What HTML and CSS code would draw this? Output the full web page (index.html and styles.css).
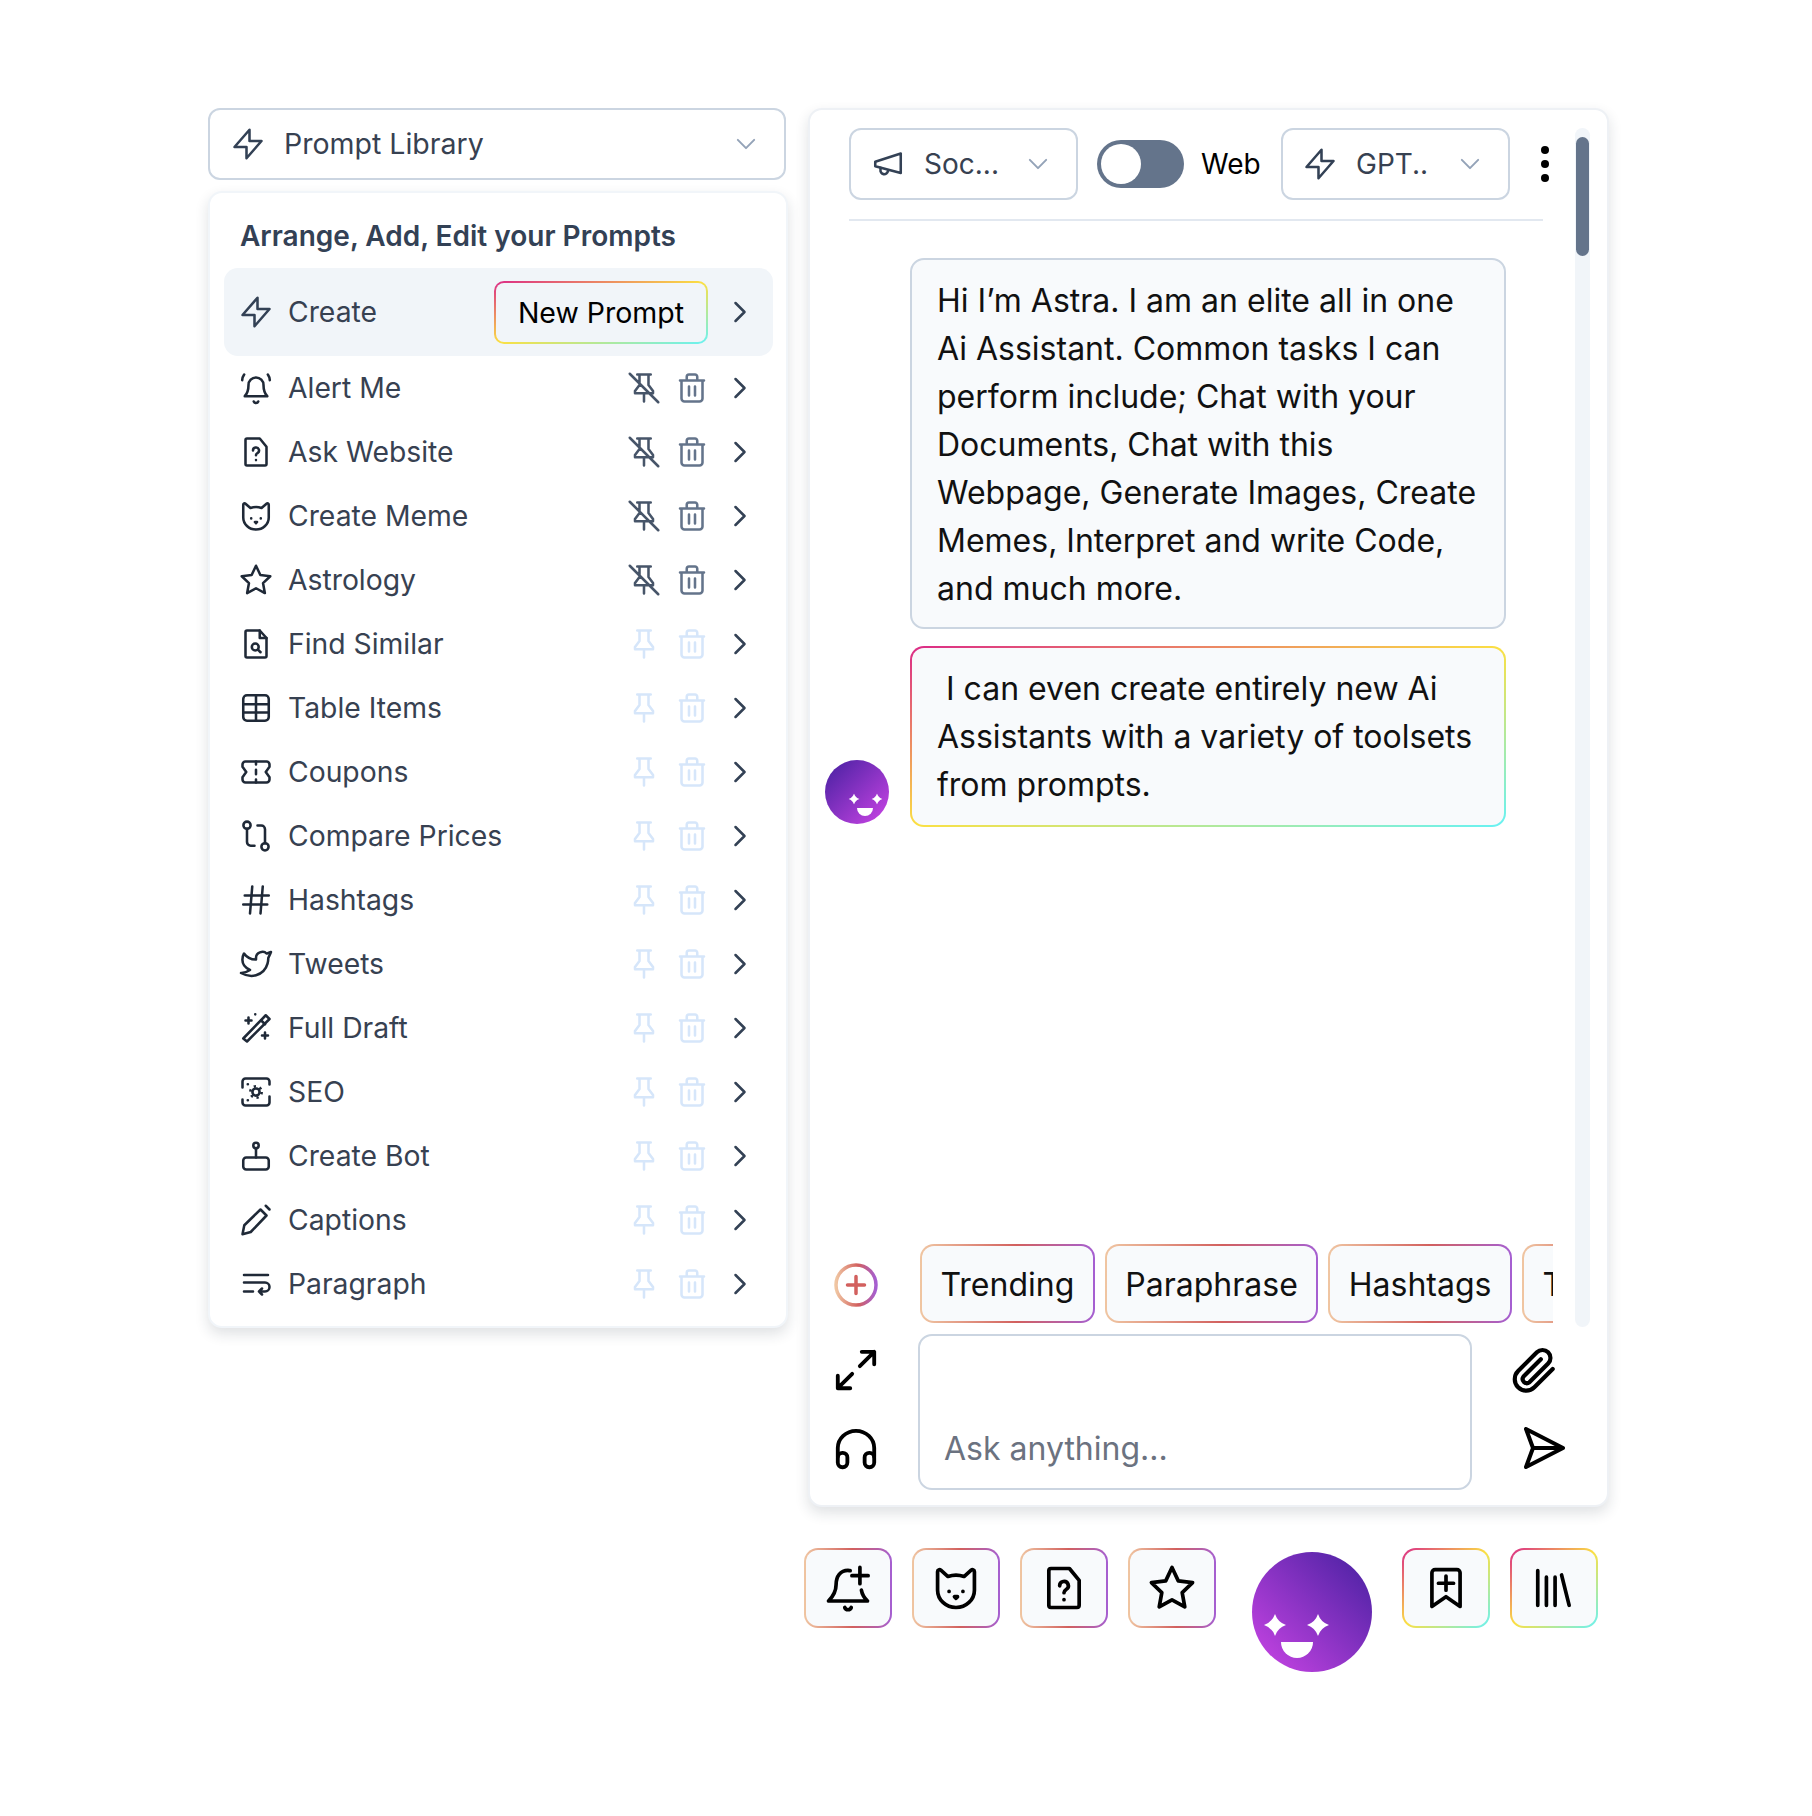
FILE: index.html
```html
<!DOCTYPE html>
<html lang="en">
<head>
  <meta charset="UTF-8">
  <title>Prompt Library</title>
  <link rel="stylesheet" href="styles.css">
</head>
<body>
  <svg class="defs" width="0" height="0">
    <defs>
      <linearGradient id="g-chip" x1="0" y1="0" x2="1" y2="0">
        <stop offset="0" stop-color="#f0c6a2"/><stop offset=".55" stop-color="#d2605e"/><stop offset="1" stop-color="#a55fd2"/>
      </linearGradient>
      <linearGradient id="g-face" x1="1" y1="0" x2="0" y2="1">
        <stop offset="0" stop-color="#4520a0"/><stop offset="1" stop-color="#cc45e6"/>
      </linearGradient>
      <linearGradient id="g-face-small" x1="0" y1="0" x2="1" y2="1">
        <stop offset="0" stop-color="#4520a0"/><stop offset="1" stop-color="#cc45e6"/>
      </linearGradient>
    </defs>
    <symbol id="i-bolt" viewBox="0 0 24 24"><path d="M13 2.500V10h8L11 21.500V14H3z"/></symbol>
    <symbol id="i-bell" viewBox="0 0 24 24"><path d="M4.500 17.500c1.700-1.800 2.500-3.500 2.500-7.500a5 5 0 0 1 10 0c0 4 .8 5.700 2.500 7.500z"/><path d="M10.500 21a1.600 1.600 0 0 0 3 0"/><path d="M2.800 6.800c.1-1.500.5-2.700 1.300-3.800M21.200 6.800c-.1-1.500-.5-2.700-1.300-3.800"/></symbol>
    <symbol id="i-file-q" viewBox="0 0 24 24"><path d="M6 3h8.500L19 8.500V20a1 1 0 0 1-1 1H6a1 1 0 0 1-1-1V4a1 1 0 0 1 1-1z"/><path d="M10 11a2 2 0 1 1 3 1.700c-.6.4-1 .8-1 1.500M12 17.300v.1"/></symbol>
    <symbol id="i-cat" viewBox="0 0 24 24"><path d="M3.500 4.500c0-.9.900-1.200 1.500-.7l3.300 2.900a11 11 0 0 1 7.400 0L19 3.800c.6-.5 1.500-.2 1.500.7V13a8.500 8 0 0 1-17 0z"/><path d="M8.800 13.500v.1M15.200 13.500v.1M11.300 16h1.400l-.7.800z"/></symbol>
    <symbol id="i-star" viewBox="0 0 24 24"><path d="M12 2.500l2.900 6.200 6.600.8-4.800 4.600 1.200 6.600L12 17.500l-5.900 3.200 1.200-6.600-4.800-4.600 6.600-.8z"/></symbol>
    <symbol id="i-file-s" viewBox="0 0 24 24"><path d="M6 3h8.500L19 8V20a1 1 0 0 1-1 1H6a1 1 0 0 1-1-1V4a1 1 0 0 1 1-1z"/><path d="M14.500 3v5H19"/><circle cx="11.500" cy="14" r="2.300"/><path d="M13.300 15.800l1.700 1.700"/></symbol>
    <symbol id="i-table" viewBox="0 0 24 24"><rect x="3.500" y="3.500" width="17" height="17" rx="2.500"/><path d="M12 3.500v17M3.500 9.500h17M3.500 15h17"/></symbol>
    <symbol id="i-coupon" viewBox="0 0 24 24"><path d="M5 5h14a2 2 0 0 1 2 2v1.500L18.500 12l2.500 3.500V17a2 2 0 0 1-2 2H5a2 2 0 0 1-2-2v-1.500L5.500 12 3 8.500V7a2 2 0 0 1 2-2z"/><path d="M12 5v2M12 10.500v3M12 17v2"/></symbol>
    <symbol id="i-compare" viewBox="0 0 24 24"><circle cx="6" cy="4.800" r="2.400"/><circle cx="18" cy="19.200" r="2.400"/><path d="M6 7.200V16a2.500 2.500 0 0 0 2.500 2.500h2.500M13 5h2.500A2.500 2.500 0 0 1 18 7.500v9.300"/></symbol>
    <symbol id="i-hash" viewBox="0 0 24 24"><path d="M9.500 3L8 21M16.500 3L15 21M4.500 9h16M3.500 15h16"/></symbol>
    <symbol id="i-bird" viewBox="0 0 24 24"><path d="M22 4.010c-1 .49-1.980.689-3 .99-1.121-1.265-2.783-1.335-4.380-.737S11.977 6.323 12 8v1c-3.245.083-6.135-1.395-8-4 0 0-4.182 7.433 4 11-1.872 1.247-3.739 2.088-6 2 3.308 1.803 6.913 2.423 10.034 1.517 3.580-1.040 6.522-3.723 7.651-7.742a13.840 13.840 0 0 0 .497-3.753c0-.249 1.510-2.772 1.818-4.013z"/></symbol>
    <symbol id="i-wand" viewBox="0 0 24 24"><path d="M3.500 19l15-15.500 2.500 2.500L6 21z"/><path d="M15.500 7l2.500 2.500M7 5v4M5 7h4M18 15v4M16 17h4M11.500 2.800v.1"/></symbol>
    <symbol id="i-seo" viewBox="0 0 24 24"><path d="M3 9V5a2 2 0 0 1 2-2h14a2 2 0 0 1 2 2v2M21 15v4a2 2 0 0 1-2 2H5a2 2 0 0 1-2-2v-2M6.500 6.800h.1M6.500 17.500h.1"/><circle cx="12" cy="12" r="2.400"/><circle cx="12" cy="12" r="3.800" stroke-dasharray="1.500 2.480" stroke-linecap="butt"/></symbol>
    <symbol id="i-bot" viewBox="0 0 24 24"><rect x="3.500" y="13" width="17" height="8" rx="2"/><path d="M12 13V7.500"/><circle cx="12" cy="5" r="1.800"/></symbol>
    <symbol id="i-pencil" viewBox="0 0 24 24"><path d="M3 21.500l1.200-6L15 5l4 4L8.500 20z"/><path d="M18.500 2.500L21 5"/></symbol>
    <symbol id="i-wrap" viewBox="0 0 24 24"><path d="M4 6h16M4 11h14a3 3 0 0 1 0 6h-4l2-2m-2 2l2 2M4 17h6"/></symbol>
    <symbol id="i-pin" viewBox="0 0 24 24"><path d="M7.500 3h9M9 3v7l-3 4v1.500h12V14l-3-4V3M12 15.500V21"/></symbol>
    <symbol id="i-nopin" viewBox="0 0 24 24"><path d="M7.500 3h9M9 3v7l-3 4v1.500h12V14l-3-4V3M12 15.500V21M2.500 2.500l19 19"/></symbol>
    <symbol id="i-trash" viewBox="0 0 24 24"><path d="M4 7h16M8.500 7V4.500A1.500 1.500 0 0 1 10 3h4a1.500 1.500 0 0 1 1.500 1.500V7M5 7v12a2 2 0 0 0 2 2h10a2 2 0 0 0 2-2V7M10 11v6M14 11v6"/></symbol>
    <symbol id="i-right" viewBox="0 0 24 24"><path d="M9 6l6 6-6 6"/></symbol>
    <symbol id="i-down" viewBox="0 0 24 24"><path d="M5 8.500l7 7 7-7"/></symbol>
    <symbol id="i-mega" viewBox="0 0 24 24"><path d="M20.500 5v13L3.500 13.500v-3z"/><path d="M7 14.500v1.300a2.500 2.500 0 0 0 5 .9"/></symbol>
    <symbol id="i-expand" viewBox="0 0 24 24"><path d="M15 2.500h6.500V9M21.500 2.500L14 10M2.500 15v6.500H9M2.500 21.500L10 14"/></symbol>
    <symbol id="i-phones" viewBox="0 0 24 24"><path d="M2.500 16v-4.500a9.500 9 0 0 1 19 0V16"/><rect x="2.500" y="14" width="5" height="7.500" rx="2.400"/><rect x="16.500" y="14" width="5" height="7.500" rx="2.400"/></symbol>
    <symbol id="i-clip" viewBox="0 0 24 24"><path d="M20.500 11.500l-8.800 8.800a5.500 5.500 0 0 1-7.800-7.800l9-9a3.800 3.800 0 0 1 5.400 5.400l-9 9a2 2 0 0 1-2.800-2.800l8.300-8.300"/></symbol>
    <symbol id="i-send" viewBox="0 0 24 24"><path d="M3.500 2.500L22 12 3.500 21.500 7 12zM7 12h15"/></symbol>
    <symbol id="i-bell-plus" viewBox="0 0 24 24"><path d="M13 4c-.3 0-.7-.1-1-.1-3.500 0-5.500 2.700-5.500 6.600 0 3.500-1.500 5.500-3.500 7.500h18c-1.500-1.500-2.500-3-2.800-5"/><path d="M10.500 21a1.600 1.600 0 0 0 3 0"/><path d="M17.500 2.500V10M13.800 6.300h7.500"/></symbol>
    <symbol id="i-bookmark" viewBox="0 0 24 24"><path d="M5.500 5A1.500 1.500 0 0 1 7 3.500h10A1.500 1.500 0 0 1 18.500 5v15.500L12 16l-6.500 4.500z"/><path d="M12 6.500v6.500M8.500 9.800h7"/></symbol>
    <symbol id="i-books" viewBox="0 0 24 24"><path d="M4.500 4v16M8.500 7v13M12.500 7v13M15.500 6l3.500 14"/></symbol>
    <symbol id="i-spark" viewBox="0 0 24 24"><path d="M12 0Q15 9 24 12Q15 15 12 24Q9 15 0 12Q9 9 12 0z"/></symbol>
  </svg>

  <div class="page">
    <div class="library">
      <div class="select select-wide">
        <svg class="ic"><use href="#i-bolt"/></svg>
        <span class="select-text">Prompt Library</span>
        <svg class="ic ic-down"><use href="#i-down"/></svg>
      </div>

      <div class="menu">
        <h2 class="menu-title">Arrange, Add, Edit your Prompts</h2>

        <div class="row row-active">
          <svg class="ic"><use href="#i-bolt"/></svg>
          <span class="row-label">Create</span>
          <button class="new-prompt">New Prompt</button>
          <svg class="ic row-go"><use href="#i-right"/></svg>
        </div>

        <div class="row"><svg class="ic"><use href="#i-bell"/></svg><span class="row-label">Alert Me</span><svg class="ic act pin-on"><use href="#i-nopin"/></svg><svg class="ic act trash-on"><use href="#i-trash"/></svg><svg class="ic row-go"><use href="#i-right"/></svg></div>
        <div class="row"><svg class="ic"><use href="#i-file-q"/></svg><span class="row-label">Ask Website</span><svg class="ic act pin-on"><use href="#i-nopin"/></svg><svg class="ic act trash-on"><use href="#i-trash"/></svg><svg class="ic row-go"><use href="#i-right"/></svg></div>
        <div class="row"><svg class="ic"><use href="#i-cat"/></svg><span class="row-label">Create Meme</span><svg class="ic act pin-on"><use href="#i-nopin"/></svg><svg class="ic act trash-on"><use href="#i-trash"/></svg><svg class="ic row-go"><use href="#i-right"/></svg></div>
        <div class="row"><svg class="ic"><use href="#i-star"/></svg><span class="row-label">Astrology</span><svg class="ic act pin-on"><use href="#i-nopin"/></svg><svg class="ic act trash-on"><use href="#i-trash"/></svg><svg class="ic row-go"><use href="#i-right"/></svg></div>
        <div class="row"><svg class="ic"><use href="#i-file-s"/></svg><span class="row-label">Find Similar</span><svg class="ic act off"><use href="#i-pin"/></svg><svg class="ic act off"><use href="#i-trash"/></svg><svg class="ic row-go"><use href="#i-right"/></svg></div>
        <div class="row"><svg class="ic"><use href="#i-table"/></svg><span class="row-label">Table Items</span><svg class="ic act off"><use href="#i-pin"/></svg><svg class="ic act off"><use href="#i-trash"/></svg><svg class="ic row-go"><use href="#i-right"/></svg></div>
        <div class="row"><svg class="ic"><use href="#i-coupon"/></svg><span class="row-label">Coupons</span><svg class="ic act off"><use href="#i-pin"/></svg><svg class="ic act off"><use href="#i-trash"/></svg><svg class="ic row-go"><use href="#i-right"/></svg></div>
        <div class="row"><svg class="ic"><use href="#i-compare"/></svg><span class="row-label">Compare Prices</span><svg class="ic act off"><use href="#i-pin"/></svg><svg class="ic act off"><use href="#i-trash"/></svg><svg class="ic row-go"><use href="#i-right"/></svg></div>
        <div class="row"><svg class="ic"><use href="#i-hash"/></svg><span class="row-label">Hashtags</span><svg class="ic act off"><use href="#i-pin"/></svg><svg class="ic act off"><use href="#i-trash"/></svg><svg class="ic row-go"><use href="#i-right"/></svg></div>
        <div class="row"><svg class="ic"><use href="#i-bird"/></svg><span class="row-label">Tweets</span><svg class="ic act off"><use href="#i-pin"/></svg><svg class="ic act off"><use href="#i-trash"/></svg><svg class="ic row-go"><use href="#i-right"/></svg></div>
        <div class="row"><svg class="ic"><use href="#i-wand"/></svg><span class="row-label">Full Draft</span><svg class="ic act off"><use href="#i-pin"/></svg><svg class="ic act off"><use href="#i-trash"/></svg><svg class="ic row-go"><use href="#i-right"/></svg></div>
        <div class="row"><svg class="ic"><use href="#i-seo"/></svg><span class="row-label">SEO</span><svg class="ic act off"><use href="#i-pin"/></svg><svg class="ic act off"><use href="#i-trash"/></svg><svg class="ic row-go"><use href="#i-right"/></svg></div>
        <div class="row"><svg class="ic"><use href="#i-bot"/></svg><span class="row-label">Create Bot</span><svg class="ic act off"><use href="#i-pin"/></svg><svg class="ic act off"><use href="#i-trash"/></svg><svg class="ic row-go"><use href="#i-right"/></svg></div>
        <div class="row"><svg class="ic"><use href="#i-pencil"/></svg><span class="row-label">Captions</span><svg class="ic act off"><use href="#i-pin"/></svg><svg class="ic act off"><use href="#i-trash"/></svg><svg class="ic row-go"><use href="#i-right"/></svg></div>
        <div class="row"><svg class="ic"><use href="#i-wrap"/></svg><span class="row-label">Paragraph</span><svg class="ic act off"><use href="#i-pin"/></svg><svg class="ic act off"><use href="#i-trash"/></svg><svg class="ic row-go"><use href="#i-right"/></svg></div>
      </div>
    </div>

    <div class="assistant">
      <div class="chat">
        <div class="chat-top">
          <div class="chat-main">
            <div class="toolbar">
              <div class="select select-small">
                <svg class="ic"><use href="#i-mega"/></svg>
                <span class="select-text">Soc...</span>
                <svg class="ic ic-down"><use href="#i-down"/></svg>
              </div>
              <div class="toggle"><span class="knob"></span></div>
              <span class="toggle-label">Web</span>
              <div class="select select-small">
                <svg class="ic"><use href="#i-bolt"/></svg>
                <span class="select-text">GPT..</span>
                <svg class="ic ic-down"><use href="#i-down"/></svg>
              </div>
              <div class="dots"><span></span><span></span><span></span></div>
            </div>

            <div class="messages">
              <div class="msg-row">
                <p class="bubble">Hi I’m Astra. I am an elite all in one Ai Assistant. Common tasks I can perform include; Chat with your Documents, Chat with this Webpage, Generate Images, Create Memes, Interpret and write Code, and much more.</p>
              </div>
              <div class="msg-row">
                <svg class="avatar-small" viewBox="0 0 64 64">
                  <circle cx="32" cy="32" r="32" fill="url(#g-face-small)"/>
                  <use href="#i-spark" x="23.500" y="33.500" width="11" height="11" fill="#fff"/>
                  <use href="#i-spark" x="46.500" y="33.500" width="11" height="11" fill="#fff"/>
                  <path d="M32 48h16a8 8 0 0 1-16 0z" fill="#fff"/>
                </svg>
                <p class="bubble bubble-rainbow">&nbsp;I can even create entirely new Ai Assistants with a variety of toolsets from prompts.</p>
              </div>
            </div>

            <div class="chips-row">
              <svg class="plus" viewBox="0 0 44 44" fill="none" stroke="url(#g-chip)" stroke-width="3.500">
                <circle cx="22" cy="22" r="20"/>
                <path d="M22 13.500v17M13.500 22h17" stroke="#d2605e" stroke-linecap="round"/>
              </svg>
              <div class="chips">
                <span class="chip">Trending</span>
                <span class="chip">Paraphrase</span>
                <span class="chip">Hashtags</span>
                <span class="chip">Tweets</span>
              </div>
            </div>
          </div>
          <div class="track"><div class="thumb"></div></div>
        </div>

        <div class="composer">
          <div class="side side-left">
            <svg class="ic ic-black"><use href="#i-expand"/></svg>
            <svg class="ic ic-black"><use href="#i-phones"/></svg>
          </div>
          <div class="ask">Ask anything...</div>
          <div class="side side-right">
            <svg class="ic ic-black clip"><use href="#i-clip"/></svg>
            <svg class="ic ic-black send"><use href="#i-send"/></svg>
          </div>
        </div>
      </div>

      <div class="dock">
        <div class="dock-btn"><svg class="ic ic-dock"><use href="#i-bell-plus"/></svg></div>
        <div class="dock-btn"><svg class="ic ic-dock"><use href="#i-cat"/></svg></div>
        <div class="dock-btn"><svg class="ic ic-dock"><use href="#i-file-q"/></svg></div>
        <div class="dock-btn"><svg class="ic ic-dock"><use href="#i-star"/></svg></div>
        <svg class="avatar-big" viewBox="0 0 120 120">
          <circle cx="60" cy="60" r="60" fill="url(#g-face)"/>
          <use href="#i-spark" x="12" y="62" width="22" height="22" fill="#fff"/>
          <use href="#i-spark" x="55" y="62" width="22" height="22" fill="#fff"/>
          <path d="M29 90h32a16 16 0 0 1-32 0z" fill="#fff"/>
        </svg>
        <div class="dock-btn dock-rainbow"><svg class="ic ic-dock"><use href="#i-bookmark"/></svg></div>
        <div class="dock-btn dock-rainbow"><svg class="ic ic-dock"><use href="#i-books"/></svg></div>
      </div>
    </div>
  </div>
</body>
</html>
```

FILE: styles.css
```css
* {
  box-sizing: border-box;
}
body {
  margin: 0;
  background: #fff;
  font-family: Inter, "Noto Sans", sans-serif;
  color: #374151;
}
.defs {
  position: absolute;
}
.page {
  display: flex;
  gap: 20px;
  padding: 108px 0 0 208px;
}

/* icons */
.ic {
  flex: none;
  width: 36px;
  height: 36px;
  fill: none;
  stroke: #334155;
  stroke-width: 1.7;
  stroke-linecap: round;
  stroke-linejoin: round;
}
.ic-down {
  width: 28px;
  height: 28px;
  stroke: #94a3b8;
}
.ic-black {
  width: 46px;
  height: 46px;
  stroke: #000;
  stroke-width: 2;
}
.ic-dock {
  width: 52px;
  height: 52px;
  stroke: #000;
  stroke-width: 1.7;
}

/* dropdowns */
.select {
  display: flex;
  flex: none;
  align-items: center;
  height: 72px;
  gap: 18px;
  background: #fff;
  border: 2px solid #cbd5e1;
  border-radius: 12px;
}
.select-text {
  flex: 1;
  font-size: 28px;
  color: #374151;
}
.select-wide {
  width: 578px;
  padding: 0 24px 0 20px;
}
.select-wide .select-text {
  padding-bottom: 2px;
  font-size: 28.5px;
}
.select-small {
  width: 229px;
  padding: 0 24px 0 19px;
}

/* prompt menu */
.library {
  width: 580px;
  flex: none;
}
.menu {
  height: 1137px;
  margin-top: 11px;
  padding: 22px 14px 0;
  background: #fff;
  border: 2px solid #f1f5f9;
  border-radius: 14px;
  box-shadow: 0 6px 14px rgba(30, 41, 59, 0.14);
}
.menu-title {
  height: 42px;
  margin: 0 0 11px;
  padding-left: 16px;
  font-size: 28px;
  font-weight: 600;
  line-height: 42px;
  color: #334155;
}
.row {
  display: flex;
  align-items: center;
  height: 64px;
  padding: 0 14px;
}
.row > .ic:first-child {
  stroke: #1f2937;
}
.row-active {
  height: 88px;
  margin-right: -1px;
  padding-right: 15px;
  background: #f1f5f9;
  border-radius: 14px;
}
.row-active > .ic:first-child {
  stroke: #334155;
}
.row-label {
  flex: 1;
  margin-left: 14px;
  font-size: 28.3px;
  color: #374151;
}
.row-go {
  margin-left: 12px;
}
.act + .act {
  margin-left: 12px;
}
.pin-on {
  stroke: #475569;
}
.trash-on {
  stroke: #64748b;
}
.off {
  stroke: #d6e6fa;
}
.new-prompt {
  width: 214px;
  height: 63px;
  margin-right: 2px;
  padding: 0;
  font: 28.5px Inter, "Noto Sans", sans-serif;
  color: #000;
  border: 2px solid transparent;
  border-radius: 10px;
  background: linear-gradient(#f1f5f9, #f1f5f9) padding-box,
    linear-gradient(to bottom right, #db2a87, #fbe043 50%, #67f2f5) border-box;
}

/* chat panel */
.assistant {
  width: 801px;
  flex: none;
}
.chat {
  display: flex;
  flex-direction: column;
  height: 1399px;
  padding: 18px 17px 15px 0;
  background: #fff;
  border: 2px solid #eef1f5;
  border-radius: 14px;
  box-shadow: 0 6px 14px rgba(30, 41, 59, 0.14);
}
.chat-top {
  display: flex;
  flex: 1;
  gap: 20px;
  min-height: 0;
}
.chat-main {
  display: flex;
  flex: 1;
  flex-direction: column;
  min-width: 0;
  padding-bottom: 4px;
}
.track {
  width: 15px;
  padding: 9px 1px 0;
  background: #f1f5f9;
  border-radius: 8px;
}
.thumb {
  height: 119px;
  background: #64748b;
  border-radius: 7px;
}
.toolbar {
  display: flex;
  align-items: center;
  margin: 0 12px 0 39px;
  padding-bottom: 19px;
  border-bottom: 2px solid #e2e8f0;
}
.toggle {
  display: flex;
  flex: none;
  align-items: center;
  width: 87px;
  height: 48px;
  margin-left: 19px;
  padding: 0 4px;
  background: #64748b;
  border-radius: 24px;
}
.knob {
  width: 40px;
  height: 40px;
  background: #fff;
  border-radius: 50%;
}
.toggle-label {
  flex: none;
  width: 80px;
  margin-left: 17px;
  font-size: 28px;
  color: #000;
}
.dots {
  display: flex;
  flex: none;
  flex-direction: column;
  gap: 6px;
  margin: 0 -4px 0 31px;
}
.dots span {
  width: 8px;
  height: 8px;
  background: #000;
  border-radius: 50%;
}

.messages {
  display: flex;
  flex: 1;
  flex-direction: column;
  gap: 17px;
  padding: 37px 0 0 13px;
}
.msg-row {
  display: flex;
  align-items: flex-end;
  justify-content: flex-end;
  width: 683px;
  gap: 21px;
}
.bubble {
  width: 596px;
  margin: 0;
  padding: 17px 22px 14px 25px;
  font-size: 32px;
  line-height: 48px;
  color: #111;
  background: #f8fafc;
  border: 2px solid #cbd5e1;
  border-radius: 14px;
}
.bubble-rainbow {
  padding: 17px 22px 16px 25px;
  border-color: transparent;
  background: linear-gradient(#f8fafc, #f8fafc) padding-box,
    linear-gradient(to bottom right, #db2a87, #fbe043 50%, #67f2f5) border-box;
}
.avatar-small {
  flex: none;
  width: 64px;
  height: 64px;
  margin-bottom: 3px;
}

.chips-row {
  display: flex;
  align-items: center;
  height: 79px;
}
.plus {
  flex: none;
  width: 44px;
  height: 44px;
  margin: 2px 42px 0 24px;
}
.chips {
  display: flex;
  gap: 10px;
  min-width: 0;
  margin-right: 2px;
  overflow: hidden;
}
.chip {
  flex: none;
  display: flex;
  align-items: center;
  height: 79px;
  padding: 2px 18.500px 0;
  font-size: 32px;
  color: #111;
  border: 2px solid transparent;
  border-radius: 14px;
  background: linear-gradient(#f8fafc, #f8fafc) padding-box,
    linear-gradient(to right, #f0c6a2, #d2605e 55%, #a55fd2) border-box;
}

.composer {
  display: flex;
  margin-top: 7px;
}
.side {
  display: flex;
  flex-direction: column;
  align-items: center;
  gap: 33px;
  padding-top: 13px;
}
.side-left {
  width: 92px;
  margin-right: 16px;
}
.side-right {
  width: 100px;
  margin-left: 18px;
}
.clip {
  width: 50px;
  height: 50px;
  margin: -2px 10px -2px 0;
}
.send {
  width: 48px;
  height: 48px;
  margin: -2px 0 0 6px;
}
.ask {
  display: flex;
  align-items: flex-end;
  width: 554px;
  height: 156px;
  padding: 0 0 15px 24px;
  font-size: 32px;
  line-height: 48px;
  color: #6b7280;
  border: 2px solid #cbd5e1;
  border-radius: 14px;
}

/* bottom dock */
.dock {
  display: flex;
  align-items: flex-start;
  gap: 20px;
  margin: 41px 0 0 -4px;
}
.dock-btn {
  display: flex;
  align-items: center;
  justify-content: center;
  width: 88px;
  height: 80px;
  border: 2px solid transparent;
  border-radius: 14px;
  background: linear-gradient(#f8fafc, #f8fafc) padding-box,
    linear-gradient(to right, #f0c6a2, #d2605e 55%, #a55fd2) border-box;
}
.dock-rainbow {
  background: linear-gradient(#f8fafc, #f8fafc) padding-box,
    linear-gradient(to bottom right, #db2a87, #fbe043 50%, #67f2f5) border-box;
}
.avatar-big {
  flex: none;
  width: 120px;
  height: 120px;
  margin: 4px 10px 0 16px;
}
```
